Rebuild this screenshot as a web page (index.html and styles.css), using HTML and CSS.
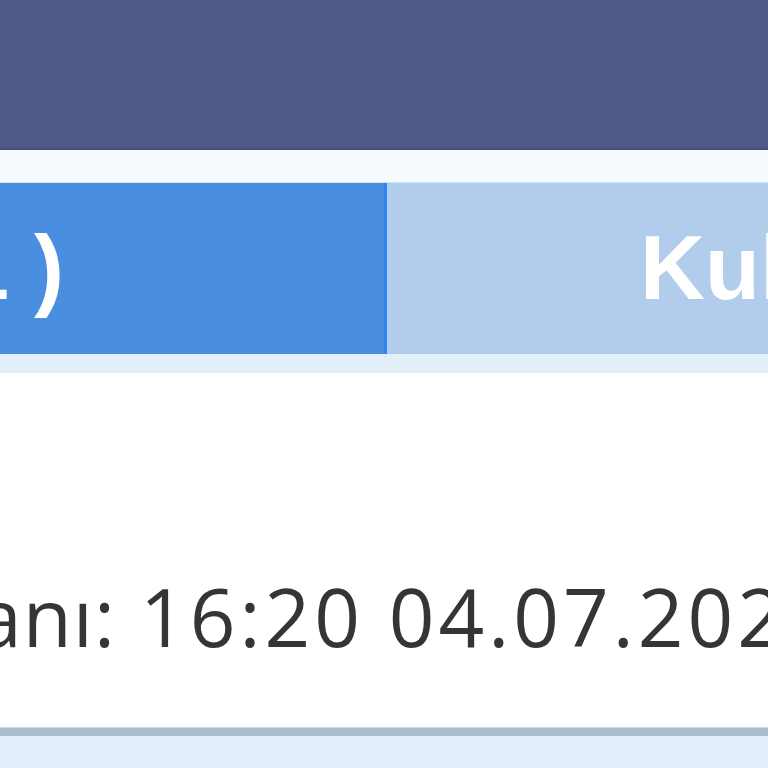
FILE: index.html
```html
<!DOCTYPE html>
<html lang="tr">
<head>
<meta charset="utf-8">
<title>Bildirimler</title>
<link rel="stylesheet" href="styles.css">
</head>
<body>
<div class="page">
  <header class="topbar"></header>
  <div class="spacer"></div>
  <nav class="tabs">
    <div class="tab tab-active"><span class="tab-label">Bildirimler ( 1 )</span></div>
    <div class="tab tab-idle"><span class="tab-label">Kullanıcılar</span></div>
  </nav>
  <div class="tabs-shadow"></div>
  <section class="content">
    <div class="meta">
      <div class="meta-label"><span>Son güncelleme zamanı:</span></div>
      <div class="meta-value">16:20 04.07.2024</div>
    </div>
  </section>
  <div class="footer-line"></div>
  <div class="footer"></div>
</div>
</body>
</html>
```
FILE: styles.css
```css
html, body {
  margin: 0;
  padding: 0;
  overflow: hidden;
  background: #ffffff;
}
.page {
  width: 768px;
  height: 768px;
  overflow: hidden;
  font-family: "Liberation Sans", Arial, sans-serif;
}
.topbar {
  height: 148px;
  background: #4d5a88;
  border-bottom: 2px solid #444f7b;
}
.spacer {
  height: 32px;
  background: #f6fbfe;
  border-bottom: 1px solid #cfe6ef;
}
.tabs {
  display: flex;
  height: 171px;
}
.tab {
  display: flex;
  align-items: center;
  white-space: nowrap;
  font-weight: bold;
  font-size: 90px;
  color: #ffffff;
  overflow: hidden;
  min-width: 0;
}
.tab-active {
  flex: 0 0 384px;
  background: #4a8ee0;
  border-right: 3px solid #2e85f0;
  justify-content: flex-end;
}
.tab-active .tab-label {
  margin-right: 320px;
}
.tab-idle {
  flex: 1;
  background: #b2cceb;
  justify-content: flex-start;
}
.tab-idle .tab-label {
  margin-left: 253px;
}
.tabs-shadow {
  height: 19px;
  background: #e3eff9;
}
.content {
  height: 354px;
  box-sizing: border-box;
  padding-top: 204px;
  background: #ffffff;
}
.meta {
  display: flex;
  gap: 24px;
  font-family: "Open Sans", "Liberation Sans", Arial, sans-serif;
  font-size: 80px;
  line-height: 78px;
  color: #353535;
  white-space: nowrap;
}
.meta-label {
  flex: 0 0 116px;
  width: 116px;
  min-width: 0;
  display: flex;
  justify-content: flex-end;
  letter-spacing: 1px;
}
.meta-label span {
  flex: none;
}
.meta-value {
  flex: none;
  letter-spacing: 4px;
}
.footer-line {
  height: 8px;
  background: #aabdd1;
  border-top: 1px solid #cdd9e4;
}
.footer {
  height: 40px;
  background: #e2eef9;
}
```
